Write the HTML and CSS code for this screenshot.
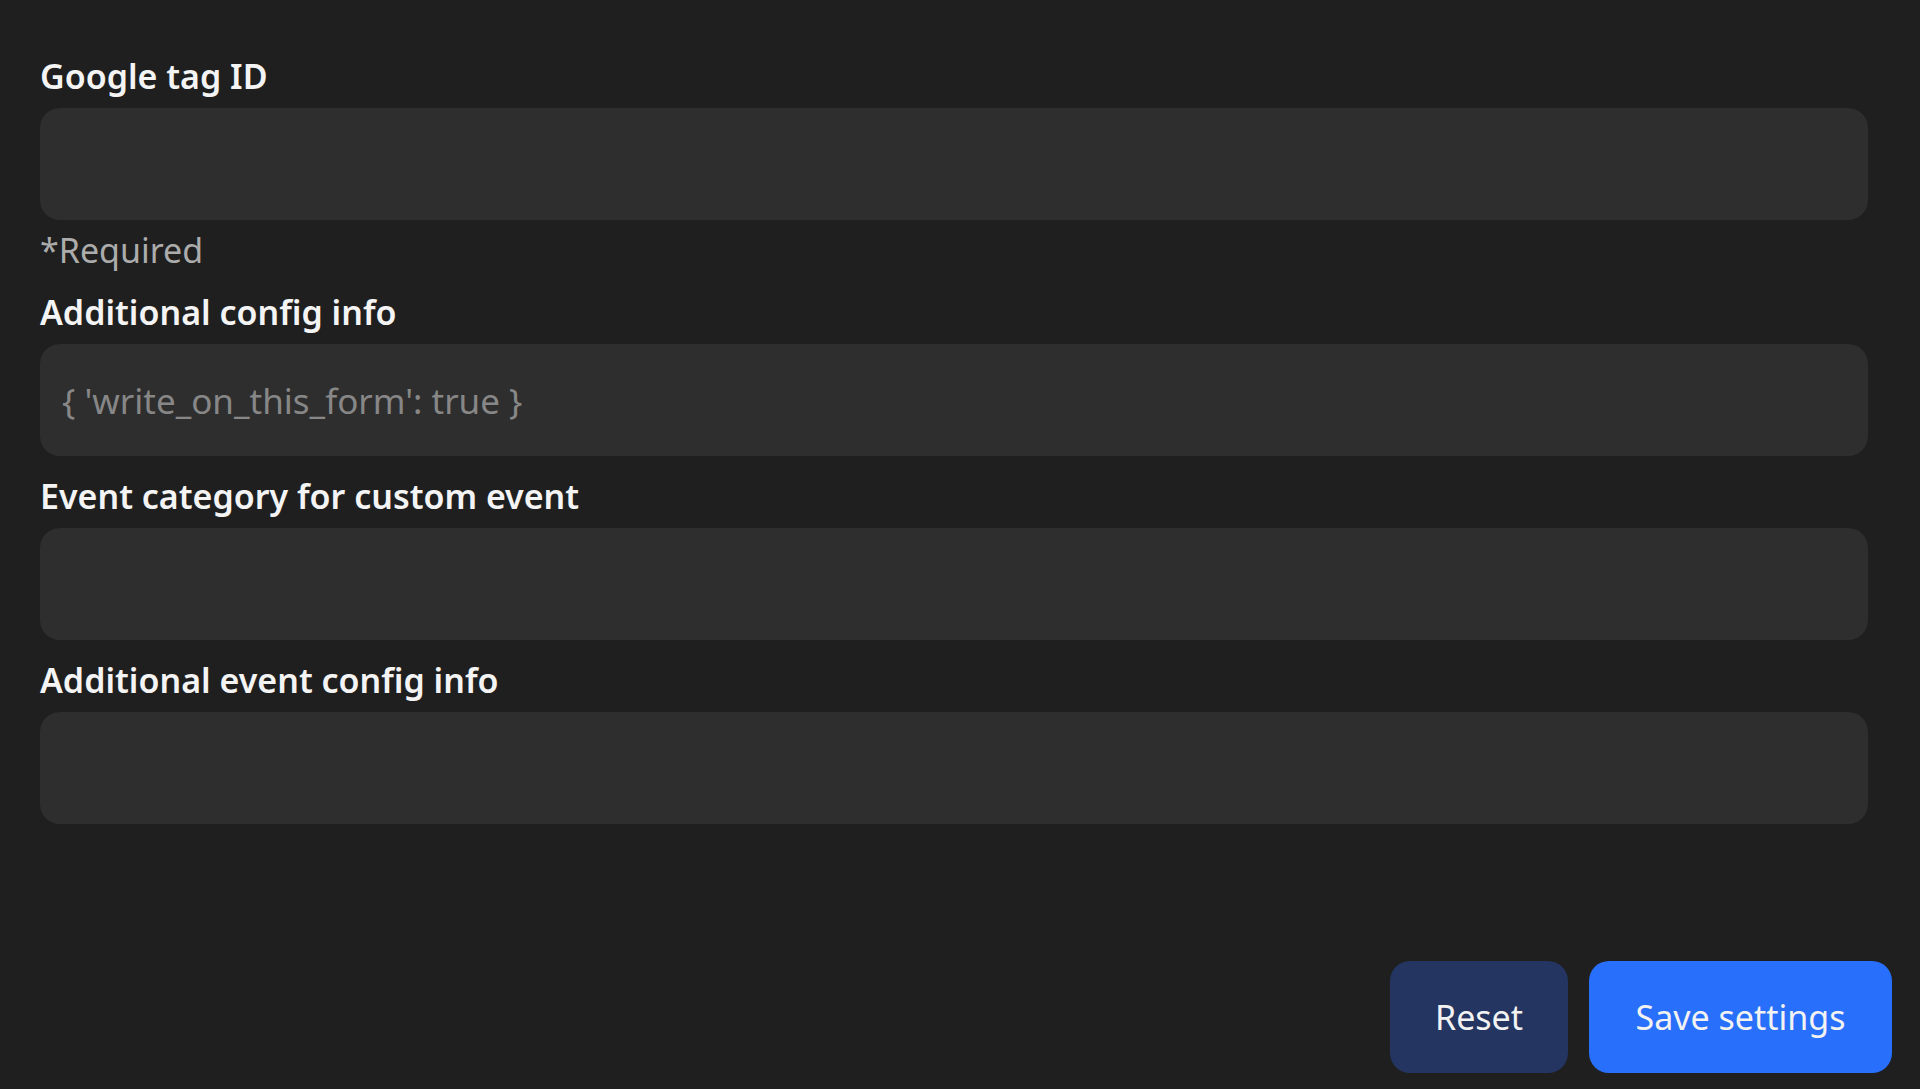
FILE: index.html
```html
<!DOCTYPE html>
<html lang="en">
<head>
<meta charset="utf-8">
<title>Google tag settings</title>
<link rel="stylesheet" href="styles.css">
</head>
<body>
<div class="page">
  <form class="form">
    <div class="field field-first">
      <label class="label" for="tag">Google tag ID</label>
      <input class="input" id="tag" type="text">
      <div class="help">*Required</div>
    </div>
    <div class="field">
      <label class="label" for="cfg">Additional config info</label>
      <input class="input" id="cfg" type="text" placeholder="{ 'write_on_this_form': true }">
    </div>
    <div class="field">
      <label class="label" for="cat">Event category for custom event</label>
      <input class="input" id="cat" type="text">
    </div>
    <div class="field">
      <label class="label" for="evt">Additional event config info</label>
      <input class="input" id="evt" type="text">
    </div>
  </form>
  <div class="actions">
    <button class="btn btn-reset" type="button">Reset</button>
    <button class="btn btn-save" type="button">Save settings</button>
  </div>
</div>
</body>
</html>
```

FILE: styles.css
```css
html, body {
  margin: 0;
  padding: 0;
  background: #1f1f1f;
}

body {
  font-family: "Noto Sans", "Open Sans", sans-serif;
  color: #f2f2f2;
}

.page {
  box-sizing: border-box;
  height: 1089px;
  padding: 51px 28px 16px 40px;
  display: flex;
  flex-direction: column;
}

.form {
  width: 1828px;
  display: flex;
  flex-direction: column;
  gap: 15px;
}

.field {
  display: flex;
  flex-direction: column;
}

.field-first {
  margin-bottom: -1px;
}

.label {
  font-size: 34px;
  line-height: 46px;
  font-weight: 600;
  color: #f4f4f4;
  padding-top: 2px;
  margin-bottom: 9px;
}

.input {
  box-sizing: border-box;
  height: 112px;
  width: 100%;
  border: none;
  outline: none;
  border-radius: 20px;
  background: #2e2e2e;
  padding: 0 22px;
  font-family: inherit;
  font-size: 35px;
  color: #f2f2f2;
}

.input::placeholder {
  color: #878787;
}

.help {
  margin-top: 7px;
  font-size: 34px;
  line-height: 46px;
  color: #acacac;
}

.actions {
  margin-top: auto;
  display: flex;
  justify-content: flex-end;
  gap: 21px;
}

.btn {
  box-sizing: border-box;
  height: 112px;
  border: none;
  border-radius: 20px;
  font-family: inherit;
  font-size: 34px;
  color: #f2f2f2;
  padding: 0 45px;
}

.btn-reset {
  background: #233560;
  width: 178px;
}

.btn-save {
  background: #2870fb;
  width: 303px;
}
```
